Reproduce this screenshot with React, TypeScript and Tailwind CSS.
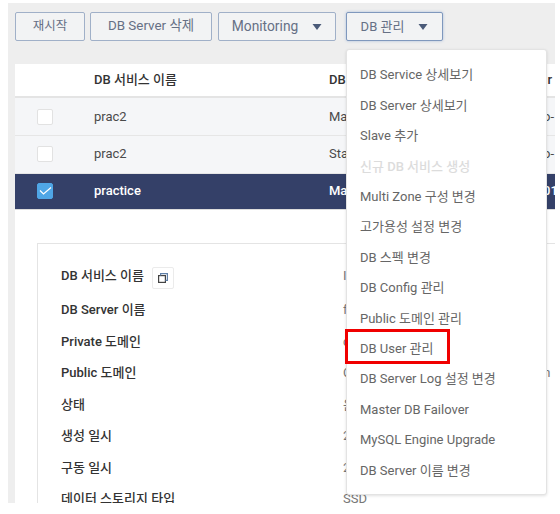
const menu: [string, boolean?][] = [
  ['DB Service 상세보기'],
  ['DB Server 상세보기'],
  ['Slave 추가'],
  ['신규 DB 서비스 생성', true],
  ['Multi Zone 구성 변경'],
  ['고가용성 설정 변경'],
  ['DB 스펙 변경'],
  ['DB Config 관리'],
  ['Public 도메인 관리'],
  ['DB User 관리'],
  ['DB Server Log 설정 변경'],
  ['Master DB Failover'],
  ['MySQL Engine Upgrade'],
  ['DB Server 이름 변경'],
];

const details = [
  ['DB Server 이름', 'f'],
  ['Private 도메인', 'c'],
  ['Public 도메인', 'Cdb-practice.public.cloud.kr.domain'],
  ['상태', '운영중'],
  ['생성 일시', '2021-01-01'],
  ['구동 일시', '2021-01-01'],
  ['데이터 스토리지 타입', 'SSD'],
];

function Caret() {
  return (
    <svg width="10" height="6" viewBox="0 0 10 6" className="shrink-0">
      <path d="M0.5 0h9L5 6z" fill="#4a5a78" />
    </svg>
  );
}

function Btn({ label, caret, focus, w, ml, size }: { label: string; caret?: boolean; focus?: boolean; w: string; ml: string; size: string }) {
  return (
    <button
      className={`h-[29px] ${w} ${ml} ${size} flex items-center justify-center gap-[14px] rounded-[2px] border bg-[#f2f3f4] text-[#667085] ${
        focus ? 'border-[#7f98bd] shadow-[0_0_3px_#a9bdd9]' : 'border-[#a0b0c8]'
      }`}
    >
      {label}
      {caret && <Caret />}
    </button>
  );
}

function Row({ name, kind, tail, h, selected }: { name: string; kind: string; tail: string; h: string; selected?: boolean }) {
  return (
    <div
      className={`flex ${h} items-center text-[13px] ${
        selected ? 'border-b border-[#dcdcdc] bg-[#344068] font-medium text-white' : 'border-b border-[#e6e6e6] bg-[#f5f6f8] text-[#4a4a4a]'
      }`}
    >
      <div className="flex w-[79px] justify-center pr-[19px]">
        <span
          className={`flex h-4 w-4 items-center justify-center rounded-[2px] border ${
            selected ? 'border-[#4fa6e6] bg-[#4fa6e6]' : 'border-[#e2e2e2] bg-white'
          }`}
        >
          {selected && (
            <svg width="13" height="10" viewBox="0 0 13 10">
              <path d="M1 4.5l3.5 3.5L12 1.5" fill="none" stroke="#fff" strokeWidth="1.2" />
            </svg>
          )}
        </span>
      </div>
      <div className="w-[235px]">{name}</div>
      <div className="flex-1 whitespace-nowrap">{kind}</div>
      <div className="w-[12px] overflow-hidden whitespace-nowrap">{tail}</div>
    </div>
  );
}

export default function App() {
  return (
    <div className="relative h-[514px] w-[560px] overflow-hidden bg-white font-['Roboto','Noto_Sans_CJK_KR',sans-serif]">
      <div className="ml-2 mt-[3px] h-[500px] w-[547px] overflow-hidden bg-[#eeeeee] pl-[7px] pt-[9px]">
        <div className="flex">
          <Btn label="재시작" w="w-[70px]" ml="ml-0" size="text-[12.5px]" />
          <Btn label="DB Server 삭제" w="w-[122px]" ml="ml-[5px]" size="text-[13.4px]" />
          <Btn label="Monitoring" caret w="w-[118px]" ml="ml-[6px]" size="text-[13.8px]" />
          <Btn label="DB 관리" caret focus w="w-[97px]" ml="ml-[10px]" size="text-[13px]" />
        </div>
        <div className="mt-[23px] h-[450px] bg-white">
          <div className="flex h-[34px] items-center border-b-2 border-[#e4e4e4] text-[13px] font-medium text-[#333]">
            <div className="w-[79px]" />
            <div className="w-[235px]">DB 서비스 이름</div>
            <div className="flex-1">DB 역할</div>
            <div className="pr-[3px]">r</div>
          </div>
          <Row name="prac2" kind="Master" tail="o-" h="h-[38px]" />
          <Row name="prac2" kind="Standby" tail="o-" h="h-[38px] pb-px" />
          <Row name="practice" kind="Master" tail="01" h="h-[36px] pb-[2px]" selected />
          <div className="ml-[22px] mt-[33px] w-[600px] border border-[#e4e4e4] bg-white pl-[23px] pt-[21px]">
            <div className="flex h-[29.25px] items-start text-[13px] font-medium text-[#333]">
              <div className="flex w-[282px] items-start gap-2">
                <span className="leading-[22px]">DB 서비스 이름</span>
                <span className="mt-[2px] flex h-[22px] w-[22px] items-center justify-center rounded-[2px] border border-[#ebebeb]">
                  <svg width="10" height="10" viewBox="0 0 10 10" fill="none" stroke="#444" strokeWidth="1.2">
                    <rect x="0.6" y="2.6" width="6.8" height="6.8" />
                    <path d="M2.6 2.6V0.6h6.8v6.8H7.4" stroke="#5f7fa8" />
                  </svg>
                </span>
              </div>
              <div className="font-normal leading-[22px] text-[#777]">I</div>
            </div>
            {details.map(([k, v]) => (
              <div key={k} className="flex h-[31.5px] items-center whitespace-nowrap text-[13px] font-medium text-[#333]">
                <div className="w-[282px]">{k}</div>
                <div className="font-normal text-[#777]">{v}</div>
              </div>
            ))}
          </div>
        </div>
      </div>
      <div className="absolute left-[346px] top-[49px] w-[201px] rounded-[3px] border border-[#e3e3e3] bg-white pb-[9px] pt-[10px] shadow-[0_1px_3px_rgba(0,0,0,0.12)]">
        {menu.map(([t, disabled]) => (
          <div
            key={t}
            className={`flex h-[30.4px] items-center whitespace-nowrap pl-[13px] text-[13px] ${
              disabled ? 'font-medium text-[#dcdcdc]' : 'text-[#666666]'
            }`}
          >
            {t}
          </div>
        ))}
      </div>
      <div className="absolute left-[345px] top-[329px] h-[35px] w-[105px] border-[3px] border-[#f00000]" />
    </div>
  );
}
